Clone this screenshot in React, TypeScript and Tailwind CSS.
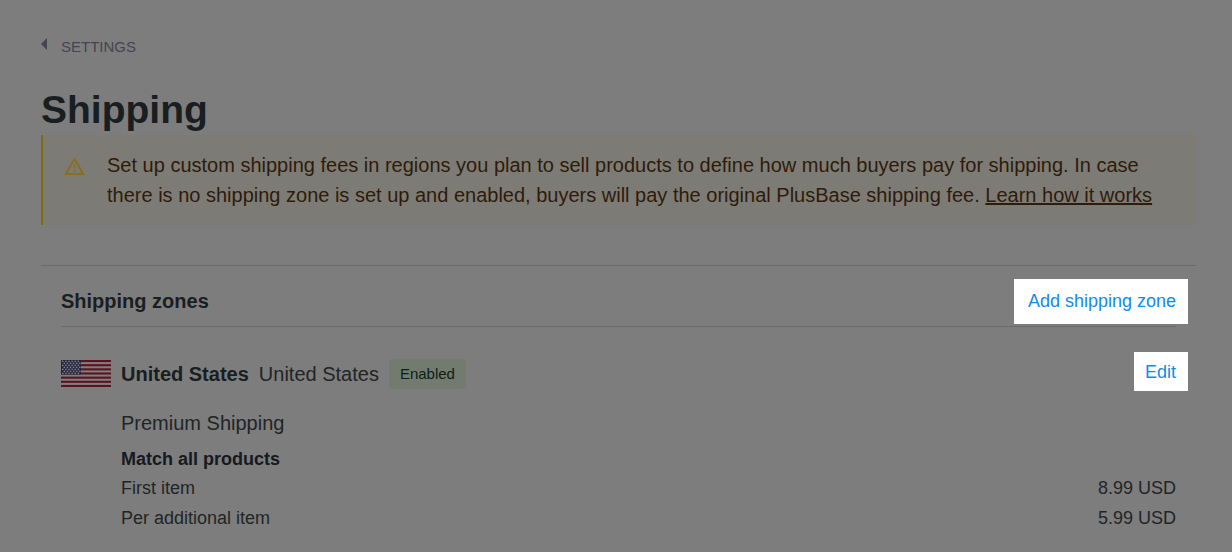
import React from 'react';

const rates = [
  { label: 'First item', price: '8.99 USD' },
  { label: 'Per additional item', price: '5.99 USD' },
];

const stripes = [0, 2, 4, 6, 8, 10, 12];
const starRows = [0, 1, 2, 3, 4, 5, 6];

const UsFlag: React.FC = () => (
  <svg className="h-[27px] w-[50px] shrink-0" viewBox="0 0 50 27" role="img" aria-label="United States flag">
    <rect width="50" height="27" fill="#7f7f7f" />
    {stripes.map((i) => (
      <rect key={i} y={(i * 27) / 13} width="50" height={27 / 13} fill="#5c1220" />
    ))}
    <rect width="20" height="14.5" fill="#24243f" />
    {starRows.map((row) =>
      [0, 1, 2, 3, 4, 5].map((col) => (
        <circle
          key={`${row}-${col}`}
          cx={1.8 + col * 3.1 + (row % 2) * 1.5}
          cy={1.4 + row * 2}
          r="0.8"
          fill="#85858c"
        />
      ))
    )}
  </svg>
);

const WarningIcon: React.FC = () => (
  <svg className="mt-[7px] h-[18px] w-[21px] shrink-0" viewBox="0 0 21 18" fill="#86701f" aria-hidden="true">
    <path d="M0 18h21L10.5 0 0 18zm3.6-2.1L10.5 4.1l6.9 11.8H3.6zM9.5 13h2v2h-2zM9.5 7.5h2v4h-2z" />
  </svg>
);

const App: React.FC = () => {
  return (
    <div className="min-h-screen bg-[#7d7d7d] pr-9 pl-[41px] pt-[33px] pb-4 font-['Liberation_Sans',Arial,sans-serif] text-[#212526]">
      {/* Breadcrumb */}
      <nav>
        <a href="#settings" className="inline-flex items-center text-[15px] leading-7 text-[#45454f]">
          <svg className="mr-[14px] mb-[6px] h-3 w-[6px]" viewBox="0 0 6 12" fill="currentColor" aria-hidden="true">
            <path d="M6 0v12L0 6z" />
          </svg>
          SETTINGS
        </a>
      </nav>

      <h1 className="mt-6 text-[39px] leading-[50px] font-bold text-[#191e21]">Shipping</h1>

      {/* Notice */}
      <div className="flex border-l-2 border-[#7f6c0d] bg-[#7d7b75] py-[15px] pr-9 pl-[21px] text-[#2e1b0b]">
        <WarningIcon />
        <p className="ml-[22px] text-xl leading-[30px]">
          Set up custom shipping fees in regions you plan to sell products to define how much buyers pay for shipping. In
          case there is no shipping zone is set up and enabled, buyers will pay the original PlusBase shipping fee.{' '}
          <a href="#learn" className="underline">
            Learn how it works
          </a>
        </p>
      </div>

      {/* Shipping zones */}
      <section className="mt-10 border-t border-[#6c6c6c] px-5">
        <div className="flex items-center justify-between border-b border-[#6c6c6c] pt-[13px] pb-[2px]">
          <h2 className="pb-[2px] text-xl font-bold text-[#191e21]">Shipping zones</h2>
          <button className="-mr-3 h-[45px] bg-white pr-3 pb-[2px] pl-[14px] text-lg text-[#118bee]">
            Add shipping zone
          </button>
        </div>

        <div className="mt-[25px] flex items-center justify-between">
          <div className="flex items-center pt-1 text-xl">
            <UsFlag />
            <span className="ml-[10px] font-bold text-[#191e21]">United States</span>
            <span className="ml-[10px]">United States</span>
            <span className="ml-[10px] rounded bg-[#737a70] px-[11px] text-[15px] leading-[30px] text-[#0d1f13]">
              Enabled
            </span>
          </div>
          <button className="-mr-3 h-[39px] bg-white pr-3 pl-[11px] text-lg text-[#118bee]">Edit</button>
        </div>

        <div className="mt-[17px] pl-[60px]">
          <h3 className="text-xl leading-[30px]">Premium Shipping</h3>
          <p className="mt-[7px] text-lg leading-[28px] font-bold text-[#151920]">Match all products</p>
          <dl className="text-lg leading-[30px]">
            {rates.map((rate) => (
              <div key={rate.label} className="flex justify-between">
                <dt>{rate.label}</dt>
                <dd>{rate.price}</dd>
              </div>
            ))}
          </dl>
        </div>
      </section>
    </div>
  );
};

export default App;
